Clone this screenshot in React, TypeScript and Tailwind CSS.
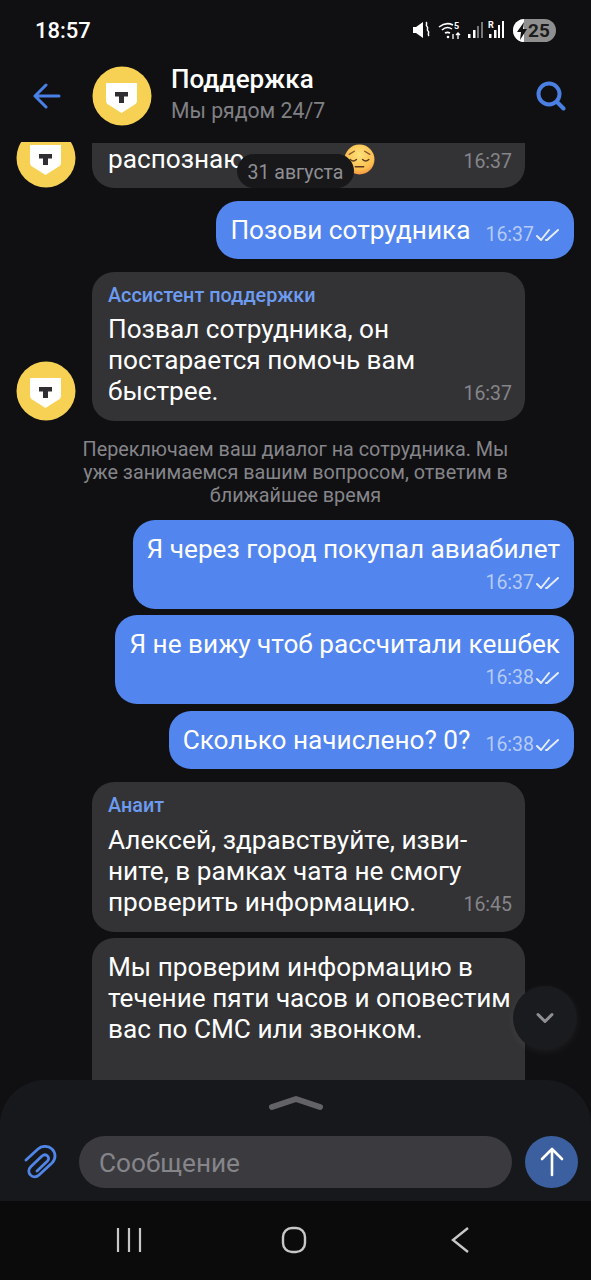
import React from "react";
import { ChevronDown } from "lucide-react";

const Logo = () => (
  <svg width="60" height="60" viewBox="0 0 60 60" className="shrink-0">
    <circle cx="30" cy="30" r="29.5" fill="#f7d154" />
    <path d="M14 17h31v17c0 3-1 4-3 5l-12.500 8-12.500-8c-2-1-3-2-3-5z" fill="#ffffff" />
    <path d="M23 26h13v4.500h-4v6.500h-5v-6.500h-4z" fill="#2f2f33" />
  </svg>
);

const SadEmoji = () => (
  <svg width="31" height="31" viewBox="0 0 30 30" className="shrink-0">
    <defs>
      <radialGradient id="face" cx="50%" cy="35%" r="70%">
        <stop offset="0%" stopColor="#fde27a" />
        <stop offset="70%" stopColor="#fbbd4f" />
        <stop offset="100%" stopColor="#f58a3c" />
      </radialGradient>
    </defs>
    <circle cx="15" cy="15" r="14.5" fill="url(#face)" />
    <path d="M5 10l5-3M25 10l-5-3" stroke="#8a5a2b" strokeWidth="1.3" strokeLinecap="round" />
    <path d="M6 15c2 2 4 2 6 0M18 15c2 2 4 2 6 0" stroke="#5c3a1e" strokeWidth="1.4" fill="none" strokeLinecap="round" />
    <path d="M11 22h8" stroke="#5c3a1e" strokeWidth="1.5" strokeLinecap="round" />
  </svg>
);

const DoubleCheck = () => (
  <svg width="24" height="14" viewBox="0 0 24 14" fill="none" stroke="#e4ecfc" strokeWidth="2" strokeLinecap="round" strokeLinejoin="round">
    <path d="M1 8l4 4 8-10" />
    <path d="M10 12l1 0 11-10" />
  </svg>
);

const Time = ({ v, mine }: { v: string; mine?: boolean }) => (
  <div className={mine ? "flex items-center gap-[2px] text-[19.500px] leading-[27px] text-[#b5cbf7] shrink-0" : "text-[19.500px] leading-[27px] text-[#85858a] shrink-0"}>
    {v}
    {mine && <DoubleCheck />}
  </div>
);

const Mine = ({ text, time, wrap, mt }: { text: string; time: string; wrap?: boolean; mt: string }) => (
  <div className={`self-end mr-[17px] bg-[#5285ee] rounded-[22px] px-[14px] text-white ${mt} ${wrap ? "pt-[14px] pb-[13px]" : "pt-[14px] pb-[13px] flex items-end gap-[15px]"}`}>
    <div className="text-[26.200px] leading-[31px]">{text}</div>
    <div className={wrap ? "flex justify-end mt-[4px]" : "-mb-[2px]"}>
      <Time v={time} mine />
    </div>
  </div>
);

const Theirs = ({ name, lines, time, mt, avatar, gap = "mb-[6px]" }: { name: string; lines: string[]; time: string; mt: string; avatar?: boolean; gap?: string }) => (
  <div className={`flex items-end ml-[16px] ${mt}`}>
    <div className="w-[76px] shrink-0">{avatar && <Logo />}</div>
    <div className="w-[433px] bg-[#333335] rounded-[22px] pl-[16px] pr-[13px] pt-[12px] pb-[14px] text-white">
      <div className={`text-[19.800px] leading-[24px] font-medium text-[#6d9bf1] ${gap}`}>{name}</div>
      {lines.slice(0, -1).map((l) => (
        <div key={l} className="text-[26.200px] leading-[31px]">{l}</div>
      ))}
      <div className="flex justify-between items-end">
        <div className="text-[26.200px] leading-[31px]">{lines[lines.length - 1]}</div>
        <Time v={time} />
      </div>
    </div>
  </div>
);

export default function App() {
  return (
    <div className="w-[591px] h-[1280px] bg-[#101012] flex flex-col overflow-hidden font-['Roboto',sans-serif]">
      {/* status bar */}
      <div className="h-[60px] shrink-0 flex items-center justify-between pl-[35px] pr-[35px] text-white">
        <div className="text-[22px] font-medium">18:57</div>
        <div className="flex items-center">
          <svg width="18" height="18" viewBox="0 0 18 18" fill="#fff">
            <path d="M0 6h3l7-5v16l-7-5H0z" />
            <path d="M13 1c2 1.500-1 3 1 4.500s-1 3 1 4.500-1 3 1 5" stroke="#fff" strokeWidth="1.500" fill="none" />
          </svg>
          <svg width="24" height="20" viewBox="0 0 24 20" fill="none" stroke="#fff" strokeWidth="1.500" className="ml-[7px]">
            <path d="M1 7c5-4 10-4 14-2M4 10c3-3 7-3 10-1M7 13c2-1 3-1 5 0" />
            <circle cx="10" cy="17" r="1.300" fill="#fff" stroke="none" />
            <path d="M15 14v5M20 19v-6M18 15l2-2 2 2" strokeWidth="1.300" />
            <text x="16" y="9" fontSize="9" fill="#fff" stroke="none" fontWeight="700">5</text>
          </svg>
          <svg width="16" height="18" viewBox="0 0 16 18" fill="#fff" className="ml-[5px]">
            <rect x="1" y="13" width="2.500" height="4" />
            <rect x="6" y="9" width="2.500" height="8" />
            <rect x="10" y="5" width="2" height="12" fill="#777" />
            <rect x="14" y="1" width="2" height="16" fill="#777" />
          </svg>
          <svg width="16" height="20" viewBox="0 0 16 20" fill="#fff" className="ml-[5px]">
            <text x="0" y="8" fontSize="9" fontWeight="700" fill="#fff">R</text>
            <rect x="1" y="14" width="2.500" height="4" />
            <rect x="6" y="10" width="2.500" height="8" />
            <rect x="10" y="5" width="2" height="13" />
            <rect x="14" y="1" width="2" height="17" />
          </svg>
          <div className="w-[43px] h-[23px] rounded-full bg-[#8f8f8f] overflow-hidden flex items-center relative ml-[9px]">
            <div className="w-[11px] h-full bg-white shrink-0" />
            <svg width="12" height="18" viewBox="0 0 12 18" fill="#111" className="absolute left-[3px] top-[3px]">
              <path d="M8 0L1 10h4l-1 8 7-11H7z" />
            </svg>
            <div className="absolute left-[15px] top-0 text-[19px] leading-[23px] font-bold text-[#1c1c1c]">25</div>
          </div>
        </div>
      </div>

      {/* header */}
      <div className="h-[82px] shrink-0 flex items-center pl-[33px] pr-[25px] pb-[10px]">
        <svg width="28" height="26" viewBox="0 0 28 26" fill="none" stroke="#4a80e4" strokeWidth="3" strokeLinecap="round" strokeLinejoin="round" className="mr-[31px]">
          <path d="M26 13H2M13 2L2 13l11 11" />
        </svg>
        <Logo />
        <div className="ml-[19px] flex-1 -mt-[4px]">
          <div className="text-[26px] leading-[34px] font-medium text-white">Поддержка</div>
          <div className="text-[21.200px] leading-[30px] text-[#808085]">Мы рядом 24/7</div>
        </div>
        <svg width="30" height="30" viewBox="0 0 30 30" fill="none" stroke="#4a80e4" strokeWidth="4" strokeLinecap="round">
          <circle cx="13" cy="13" r="10.500" />
          <path d="M21 21l6.500 6.500" />
        </svg>
      </div>

      {/* messages */}
      <div className="h-[938px] shrink-0 relative overflow-hidden flex flex-col">
        <div className="flex items-end ml-[16px] h-[46px] shrink-0">
          <div className="w-[76px] shrink-0 h-[46px] flex items-end overflow-hidden"><Logo /></div>
          <div className="w-[433px] h-[45px] bg-[#333335] rounded-b-[22px] pl-[16px] pr-[13px] flex items-start justify-between text-white">
            <div className="flex items-center gap-[4px] text-[26.200px] leading-[31px] mt-[1px]">
              распознаю вопрос
              <SadEmoji />
            </div>
            <div className="mt-[5px]"><Time v="16:37" /></div>
          </div>
        </div>

        <Mine mt="mt-[13px]" text="Позови сотрудника" time="16:37" />
        <Theirs
          mt="mt-[13px]"
          avatar
          name="Ассистент поддержки"
          lines={["Позвал сотрудника, он", "постарается помочь вам", "быстрее."]}
          time="16:37"
        />

        <div className="mt-[17px] px-[80px] text-center text-[19.800px] leading-[23px] text-[#85858a]">
          Переключаем ваш диалог на сотрудника. Мы уже занимаемся вашим вопросом, ответим в ближайшее время
        </div>

        <Mine wrap mt="mt-[13px]" text="Я через город покупал авиабилет" time="16:37" />
        <Mine wrap mt="mt-[6px]" text="Я не вижу чтоб рассчитали кешбек" time="16:38" />
        <Mine mt="mt-[7px]" text="Сколько начислено? 0?" time="16:38" />
        <Theirs
          mt="mt-[13px]"
          gap="mb-[7px]"
          name="Анаит"
          lines={["Алексей, здравствуйте, изви-", "ните, в рамках чата не смогу", "проверить информацию."]}
          time="16:45"
        />

        <div className="ml-[92px] mt-[6px] w-[433px] h-[160px] shrink-0 bg-[#333335] rounded-t-[22px] pl-[16px] pt-[14px] text-[26.200px] leading-[31px] text-white whitespace-nowrap">
          <div>Мы проверим информацию в</div>
          <div>течение пяти часов и оповестим</div>
          <div>вас по СМС или звонком.</div>
        </div>

        {/* date chip */}
        <div className="absolute left-[237px] top-[12px] w-[117px] h-[34px] rounded-full bg-[#18181b] text-[#8f8f93] text-[19.500px] leading-[37px] text-center">
          31 августа
        </div>

        {/* scroll down */}
        <div className="absolute left-[513px] top-[844px] w-[64px] h-[64px] rounded-full bg-[#1a1b1e] shadow-[0_2px_8px_rgba(255,255,255,0.06)] flex items-center justify-center">
          <ChevronDown size={28} strokeWidth={2.600} color="#8f8f93" />
        </div>
      </div>

      {/* composer */}
      <div className="h-[121px] shrink-0 bg-[#17181c] rounded-t-[45px] flex flex-col">
        <div className="h-[56px] flex justify-center pt-[15px]">
          <svg width="54" height="16" viewBox="0 0 54 16" fill="none" stroke="#636367" strokeWidth="6" strokeLinecap="round" strokeLinejoin="round">
            <path d="M3 12L27 4l24 8" />
          </svg>
        </div>
        <div className="flex items-center pl-[24px] pr-[13px]">
          <div className="w-[55px] shrink-0">
            <svg width="34" height="34" viewBox="0 0 34 34" fill="none" stroke="#4f86e8" strokeWidth="2.800" strokeLinecap="round" strokeLinejoin="round">
              <path d="M2 15L14 4C18 .5 24 .5 28 4C32 8 32 14 28 18L15 30C12.500 32.500 8.500 32.500 6.500 30C4 27.500 4.500 24 7 21.500L18 11C20 9.500 22 9.500 23.500 11C25 12.500 25 14.500 23.500 16L13 26" />
            </svg>
          </div>
          <div className="w-[433px] h-[52px] rounded-full bg-[#3b3b3f] pl-[20px] text-[26.200px] leading-[55px] text-[#85858a]">Сообщение</div>
          <div className="ml-[13px] w-[53px] h-[52px] rounded-full bg-[#3c5f9f] flex items-center justify-center">
            <svg width="24" height="30" viewBox="0 0 24 30" fill="none" stroke="#ffffff" strokeWidth="2.600" strokeLinecap="round" strokeLinejoin="round">
              <path d="M12 28V2M2 12L12 2l10 10" />
            </svg>
          </div>
        </div>
      </div>

      {/* nav bar */}
      <div className="flex-1 bg-[#0b0b0c] flex items-center pb-[1px]">
        <div className="w-[258px] flex justify-center">
          <svg width="26" height="26" viewBox="0 0 26 26" stroke="#c8c8c8" strokeWidth="2.200">
            <path d="M2 1v24M13 1v24M24 1v24" />
          </svg>
        </div>
        <svg width="26" height="28" viewBox="0 0 26 28" fill="none" stroke="#c8c8c8" strokeWidth="2.400" className="ml-[23px]">
          <rect x="2" y="2" width="22" height="24" rx="9" />
        </svg>
        <svg width="20" height="28" viewBox="0 0 20 28" fill="none" stroke="#c8c8c8" strokeWidth="2.400" className="ml-[143px]">
          <path d="M18 2L3 14l15 12" />
        </svg>
      </div>
    </div>
  );
}
